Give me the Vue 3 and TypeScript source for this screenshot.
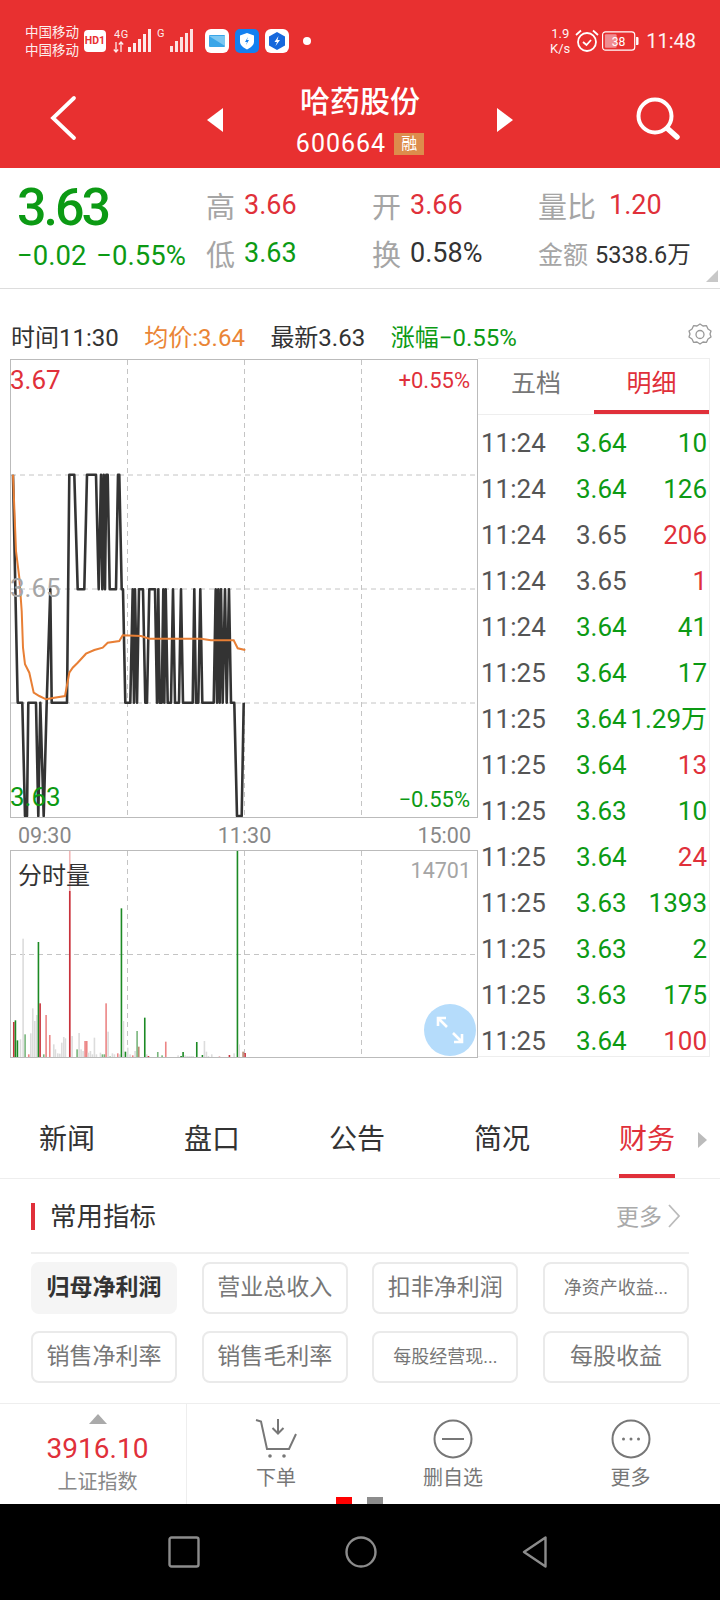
<script setup lang="ts">
type BarKind = 'r' | 'g' | 'e' | 'p' | 'q' | 'b' | 'f'
type Trade = { time: string; price: string; priceTone: string; vol: string; volTone: string }

// traced on a 3x crop of the chart, so everything here is divided by 3 below
const H = 371
const M = 715
const L = 1055
const B = 1395

const priceRaw: [number, number][] = [
  [36, H], [50, L], [64, L], [72, B], [78, B], [82, L], [105, L], [112, B], [118, L], [128, B], [137, L],
  [148, M], [152, L], [198, L], [205, H], [220, H], [230, M], [250, M], [258, H], [285, H], [293, M],
  [300, H], [304, M], [308, H], [312, M], [316, H], [320, H], [326, M], [345, M], [351, H], [355, H],
  [362, M], [366, M], [373, L], [388, L], [395, M], [399, L], [402, M], [408, L], [414, M], [426, M],
  [433, L], [438, L], [445, M], [462, M], [468, L], [472, M], [476, L], [482, L], [487, M], [490, L],
  [494, M], [500, L], [510, L], [516, M], [522, L], [534, L], [540, M], [546, L], [575, L], [580, M],
  [585, L], [592, L], [598, M], [604, L], [638, L], [644, M], [648, L], [652, M], [656, L], [660, M],
  [665, L], [672, M], [677, L], [684, M], [690, L], [700, L], [708, B], [722, B], [728, L],
]

const avgRaw: [number, number][] = [
  [36, 371], [45, 600], [55, 680], [62, 780], [66, 890], [72, 940], [85, 965], [98, 1025], [115, 1035],
  [135, 1045], [160, 1040], [192, 1035], [205, 965], [215, 950], [230, 935], [255, 908], [280, 897],
  [305, 890], [320, 875], [355, 870], [365, 853], [420, 855], [445, 863], [600, 863], [630, 868],
  [698, 868], [710, 892], [733, 897],
]

const barsRaw: [number, number, BarKind][] = [
  [38, 543, 'r'], [43, 538, 'g'], [49, 598, 'g'], [58, 595, 'e'], [66, 293, 'e'], [72, 580, 'q'], [83, 640, 'p'],
  [89, 577, 'e'], [95, 502, 'e'], [101, 540, 'e'], [107, 522, 'e'], [112, 303, 'g'], [117, 487, 'r'], [128, 640, 'q'],
  [135, 522, 'p'], [146, 582, 'p'], [158, 610, 'e'], [163, 625, 'e'], [170, 637, 'e'], [176, 638, 'e'], [182, 605, 'e'],
  [188, 588, 'e'], [193, 592, 'e'], [206, 30, 'f'], [206, 150, 'r'], [213, 585, 'e'], [228, 625, 'q'], [234, 576, 'e'],
  [240, 625, 'e'], [246, 630, 'e'], [252, 600, 'p'], [257, 600, 'p'], [262, 635, 'e'], [268, 630, 'e'], [274, 640, 'e'],
  [280, 590, 'e'], [286, 640, 'e'], [292, 650, 'g'], [298, 635, 'e'], [304, 640, 'q'], [310, 640, 'q'], [315, 487, 'p'],
  [321, 572, 'e'], [327, 647, 'g'], [334, 637, 'e'], [340, 640, 'e'], [350, 637, 'p'], [356, 640, 'e'], [361, 202, 'g'],
  [367, 540, 'e'], [373, 632, 'g'], [380, 620, 'e'], [387, 640, 'e'], [395, 643, 'p'], [402, 630, 'e'], [408, 570, 'q'],
  [413, 617, 'b'], [431, 530, 'g'], [437, 640, 'e'], [442, 645, 'r'], [449, 648, 'e'], [460, 648, 'e'], [470, 633, 'q'],
  [476, 648, 'g'], [483, 643, 'q'], [494, 602, 'p'], [506, 648, 'g'], [517, 650, 'g'], [523, 650, 'g'], [531, 643, 'e'],
  [540, 645, 'g'], [546, 633, 'g'], [552, 643, 'e'], [558, 645, 'e'], [564, 645, 'e'], [570, 645, 'e'], [576, 645, 'e'],
  [581, 648, 'r'], [587, 603, 'g'], [593, 648, 'g'], [604, 642, 'g'], [610, 600, 'e'], [616, 632, 'e'], [622, 645, 'e'],
  [632, 640, 'e'], [644, 650, 'p'], [655, 647, 'r'], [661, 648, 'p'], [668, 650, 'p'], [678, 650, 'g'], [685, 642, 'r'],
  [691, 648, 'g'], [699, 637, 'e'], [709, 30, 'g'], [714, 610, 'e'], [726, 632, 'b'], [732, 636, 'r'],
]

const barColor: Record<BarKind, string> = {
  r: '#c8323c',
  g: '#1c8a24',
  e: '#dcdcdc',
  p: '#ec8585',
  q: '#78b67c',
  b: '#b98a70',
  f: '#f2b6b6',
}

const toPoints = (raw: [number, number][]): string =>
  raw.map(([x, y]) => `${(x / 3 - 10).toFixed(1)},${(y / 3 - 9).toFixed(1)}`).join(' ')

const pricePoints = toPoints(priceRaw)
const avgPoints = toPoints(avgRaw)

const bars = barsRaw.map(([x, top, kind]) => ({
  x: x / 3 - 10.7,
  y: (top - 30) / 3,
  h: (652 - top) / 3,
  fill: barColor[kind],
}))

const G = 'up-g'
const R = 'up-r'
const N = 'up-n'

const trades: Trade[] = [
  { time: '11:24', price: '3.64', priceTone: G, vol: '10', volTone: G },
  { time: '11:24', price: '3.64', priceTone: G, vol: '126', volTone: G },
  { time: '11:24', price: '3.65', priceTone: N, vol: '206', volTone: R },
  { time: '11:24', price: '3.65', priceTone: N, vol: '1', volTone: R },
  { time: '11:24', price: '3.64', priceTone: G, vol: '41', volTone: G },
  { time: '11:25', price: '3.64', priceTone: G, vol: '17', volTone: G },
  { time: '11:25', price: '3.64', priceTone: G, vol: '1.29万', volTone: G },
  { time: '11:25', price: '3.64', priceTone: G, vol: '13', volTone: R },
  { time: '11:25', price: '3.63', priceTone: G, vol: '10', volTone: G },
  { time: '11:25', price: '3.64', priceTone: G, vol: '24', volTone: R },
  { time: '11:25', price: '3.63', priceTone: G, vol: '1393', volTone: G },
  { time: '11:25', price: '3.63', priceTone: G, vol: '2', volTone: G },
  { time: '11:25', price: '3.63', priceTone: G, vol: '175', volTone: G },
  { time: '11:25', price: '3.64', priceTone: G, vol: '100', volTone: R },
]

const tabs = ['新闻', '盘口', '公告', '简况', '财务']

const chips = [
  { text: '归母净利润', kind: 'chip--on' },
  { text: '营业总收入', kind: '' },
  { text: '扣非净利润', kind: '' },
  { text: '净资产收益...', kind: 'chip--small' },
  { text: '销售净利率', kind: '' },
  { text: '销售毛利率', kind: '' },
  { text: '每股经营现...', kind: 'chip--small' },
  { text: '每股收益', kind: '' },
]
</script>

<template>
  <div class="page">
    <header class="head">
      <div class="status">
        <div class="carriers"><span>中国移动</span><span>中国移动</span></div>
        <span class="hd">HD1</span>
        <div class="sig">
          <span class="sig__tag">4G</span>
          <svg width="40" height="24" viewBox="0 0 40 24">
            <path d="M3 13v10M.8 20.500L3 23l2.200-2.500M8 23V13M5.800 15.500L8 13l2.200 2.500" stroke="#fff" stroke-width="1.300" fill="none" opacity=".9" />
            <path d="M15 18h3v5h-3zM20 14h3v9h-3zM25 10h3v13h-3zM30 5h3v18h-3zM35 0h3v23h-3z" fill="#fff" opacity=".9" />
          </svg>
        </div>
        <div class="sig sig--g">
          <span class="sig__tag">G</span>
          <svg width="24" height="24" viewBox="0 0 24 24">
            <path d="M0 17h3v6H0zM5 12h3v11H5zM10 8h3v15h-3zM15 4h3v19h-3zM20 0h3v23h-3z" fill="#fff" opacity=".85" />
          </svg>
        </div>
        <div class="apps">
          <svg width="24" height="24" viewBox="0 0 24 24">
            <rect width="24" height="24" rx="6" fill="#fff" />
            <rect x="4" y="6" width="16" height="12" rx="1" fill="#3aa6e8" />
            <path d="M4 7l16 10V7z" fill="#7cc8f2" />
          </svg>
          <svg width="24" height="24" viewBox="0 0 24 24">
            <rect width="24" height="24" rx="5" fill="#1480f0" />
            <path d="M12 4l7 2.500v6c0 4-3.500 6-7 8-3.500-2-7-4-7-8v-6z" fill="#fff" />
            <path d="M13 8l-3 5h2l-1 3 3-5h-2z" fill="#1480f0" />
          </svg>
          <svg width="24" height="24" viewBox="0 0 24 24">
            <rect width="24" height="24" rx="6" fill="#fff" />
            <path d="M12 3l8 4.500v9L12 21l-8-4.500v-9z" fill="#1668dc" />
            <path d="M13.500 7l-4 6h2.500l-1.500 4 4.500-6h-2.500z" fill="#fff" />
          </svg>
        </div>
        <span class="status__dot"></span>
        <div class="status__right">
          <div class="speed"><span>1.9</span><span>K/s</span></div>
          <svg width="24" height="24" viewBox="0 0 24 24" fill="none" stroke="#fff" stroke-width="1.800">
            <circle cx="12" cy="13" r="9" />
            <path d="M8 13l3.500 3L16 11" />
            <path d="M1 6l5-4.500M23 6l-5-4.500" />
          </svg>
          <svg class="batt" width="37" height="20" viewBox="0 0 38 20">
            <rect x=".6" y=".6" width="33" height="18.800" rx="3" fill="none" stroke="#fff" stroke-width="1.200" />
            <rect x="3" y="3" width="12" height="14" rx="1" fill="#f08d92" />
            <path d="M35 6h1.500a1 1 0 0 1 1 1v6a1 1 0 0 1-1 1H35z" fill="#fff" />
            <text x="17" y="15" text-anchor="middle" class="batt__num">38</text>
          </svg>
          <span class="clock">11:48</span>
        </div>
      </div>
      <nav class="nav">
        <svg class="nav__back" width="30" height="46" viewBox="0 0 30 46" fill="none" stroke="#fff" stroke-width="3.800" stroke-linecap="round">
          <path d="M24 3L3 23l21 20" />
        </svg>
        <div class="nav__mid">
          <span class="tri tri--l"></span>
          <div class="nav__title">
            <strong>哈药股份</strong>
            <div class="nav__code">600664<span class="rong">融</span></div>
          </div>
          <span class="tri tri--r"></span>
        </div>
        <svg class="nav__search" width="46" height="46" viewBox="0 0 46 46" fill="none" stroke="#fff">
          <circle cx="20" cy="20" r="16.500" stroke-width="4" />
          <path d="M33 33l9 8" stroke-width="5.500" stroke-linecap="round" />
        </svg>
      </nav>
    </header>

    <section class="stats">
      <div class="stats__main">
        <div class="big">3.63</div>
        <div class="chg"><span>−0.02</span><span>−0.55%</span></div>
      </div>
      <div class="quote">
        <div class="cell"><i>高</i><b class="up-r">3.66</b></div>
        <div class="cell"><i>开</i><b class="up-r">3.66</b></div>
        <div class="cell cell--wide"><i>量比</i><b class="up-r">1.20</b></div>
        <div class="cell"><i>低</i><b class="up-g">3.63</b></div>
        <div class="cell"><i>换</i><b class="ink">0.58%</b></div>
        <div class="cell cell--small"><i>金额</i><b class="ink">5338.6万</b></div>
      </div>
      <span class="corner"></span>
    </section>

    <div class="legend">
      <span class="ink">时间11:30</span>
      <span class="legend__avg">均价:3.64</span>
      <span class="ink">最新3.63</span>
      <span class="up-g">涨幅−0.55%</span>
      <svg class="legend__gear" width="26" height="26" viewBox="0 0 26 26" fill="none" stroke="#999" stroke-width="1.300">
        <path d="M13 2l3 2 3.500-.3 1.500 3.300 3 2-1 3 1 3-3 2-1.500 3.300-3.500-.3-3 2-3-2-3.500.3L5 17l-3-2 1-3-1-3 3-2 1.500-3.300 3.500.3z" stroke-linejoin="round" />
        <circle cx="13" cy="12.500" r="4" />
      </svg>
    </div>

    <div class="board">
      <div class="charts">
        <div class="pricebox">
          <svg width="466" height="457" viewBox="0 0 466 457" class="plot">
            <g stroke="#c4c4c4" stroke-dasharray="5 4" fill="none">
              <path d="M0 115h466M0 229h466M0 343h466M116.500 0v457M233.500 0v457M350.500 0v457" />
            </g>
            <polyline :points="pricePoints" fill="none" stroke="#333" stroke-width="2.600" stroke-linejoin="round" />
            <polyline :points="avgPoints" fill="none" stroke="#e87f35" stroke-width="2" />
          </svg>
          <span class="tag tag--top up-r">3.67</span>
          <span class="tag tag--mid">3.65</span>
          <span class="tag tag--low up-g">3.63</span>
          <span class="pct pct--top up-r">+0.55%</span>
          <span class="pct pct--low up-g">−0.55%</span>
        </div>
        <div class="axis"><span>09:30</span><span>11:30</span><span>15:00</span></div>
        <div class="volbox">
          <svg width="466" height="206" viewBox="0 0 466 206" class="plot">
            <g stroke="#c4c4c4" stroke-dasharray="5 4" fill="none">
              <path d="M0 103.500h466M116.500 0v206M233.500 0v206M350.500 0v206" />
            </g>
            <rect v-for="(bar, i) in bars" :key="i" :x="bar.x" :y="bar.y" width="1.600" :height="bar.h" :fill="bar.fill" />
          </svg>
          <span class="volbox__name">分时量</span>
          <span class="volbox__max">14701</span>
          <span class="expand">
            <svg width="30" height="30" viewBox="0 0 30 30" fill="none" stroke="#fff" stroke-width="2.600">
              <path d="M3 11V3h8M3 3l9 9M27 19v8h-8M27 27l-9-9" />
            </svg>
          </span>
        </div>
      </div>

      <aside class="ticks">
        <div class="ticks__tabs">
          <span>五档</span>
          <span class="ticks__on">明细</span>
        </div>
        <div class="ticks__rows">
          <div v-for="(row, i) in trades" :key="i" class="row">
            <span class="row__time">{{ row.time }}</span>
            <span :class="['row__price', row.priceTone]">{{ row.price }}</span>
            <span :class="['row__vol', row.volTone]">{{ row.vol }}</span>
          </div>
        </div>
      </aside>
    </div>

    <div class="tabs">
      <span v-for="tab in tabs" :key="tab" :class="['tabs__item', { 'tabs__item--on': tab === '财务' }]">{{ tab }}</span>
      <span class="tabs__more"></span>
    </div>

    <section class="metrics">
      <div class="metrics__head">
        <span class="metrics__title">常用指标</span>
        <span class="metrics__more"><em>更多</em>
          <svg width="13" height="24" viewBox="0 0 13 24" fill="none" stroke="#bbb" stroke-width="1.800"><path d="M1 1l10 11L1 23" /></svg>
        </span>
      </div>
      <div class="chips">
        <span v-for="chip in chips" :key="chip.text" :class="['chip', chip.kind]">{{ chip.text }}</span>
      </div>
    </section>

    <footer class="dock">
      <div class="dock__index">
        <span class="dock__up"></span>
        <span class="dock__num">3916.10</span>
        <span class="dock__name">上证指数</span>
      </div>
      <div class="dock__acts">
        <div class="act">
          <svg width="44" height="40" viewBox="0 0 44 40" fill="none" stroke="#777" stroke-width="2">
            <path d="M2 1l5 1.500L13 30h22l7-15" />
            <path d="M24 0v14M18.500 9l5.500 5.500L29.500 9" />
            <circle cx="16" cy="37" r="1.800" fill="#777" stroke="none" />
            <circle cx="30" cy="37" r="1.800" fill="#777" stroke="none" />
          </svg>
          <span>下单</span>
        </div>
        <div class="act">
          <svg width="40" height="40" viewBox="0 0 40 40" fill="none" stroke="#777" stroke-width="2">
            <circle cx="20" cy="20" r="18.500" />
            <path d="M9 20h22" />
          </svg>
          <span>删自选</span>
        </div>
        <div class="act">
          <svg width="40" height="40" viewBox="0 0 40 40" fill="none" stroke="#777" stroke-width="2">
            <circle cx="20" cy="20" r="18.500" />
            <circle cx="12.500" cy="20" r="1.500" fill="#777" stroke="none" />
            <circle cx="20" cy="20" r="1.500" fill="#777" stroke="none" />
            <circle cx="27.500" cy="20" r="1.500" fill="#777" stroke="none" />
          </svg>
          <span>更多</span>
        </div>
      </div>
      <div class="pager"><span class="pager__on"></span><span></span></div>
    </footer>

    <div class="sysnav">
      <svg width="32" height="32" viewBox="0 0 32 32" fill="none" stroke="#8c8c8c" stroke-width="2.400"><rect x="1.500" y="1.500" width="29" height="29" rx="2" /></svg>
      <svg width="32" height="32" viewBox="0 0 32 32" fill="none" stroke="#8c8c8c" stroke-width="2.400"><circle cx="16" cy="16" r="14.500" /></svg>
      <svg width="26" height="32" viewBox="0 0 26 32" fill="none" stroke="#8c8c8c" stroke-width="2.400" stroke-linejoin="round"><path d="M23.500 1.500v29L2 16z" /></svg>
    </div>
  </div>
</template>

<style scoped>
.page {
  display: flex;
  flex-direction: column;
  width: 720px;
  height: 1600px;
  overflow: hidden;
  background: #fff;
  color: #333;
  font-family: Roboto, "Noto Sans CJK SC", sans-serif;
}

.up-r { color: #e0303a; }
.up-g { color: #0c9a14; }
.up-n { color: #555; }
.ink { color: #333; }

.head {
  flex: 0 0 168px;
  background: #e83030;
  color: #fff;
}

.status {
  display: flex;
  align-items: center;
  height: 82px;
  padding: 0 24px 0 25px;
}

.carriers {
  display: flex;
  flex-direction: column;
  width: 59px;
  font-size: 13.500px;
  line-height: 18px;
  opacity: 0.92;
}

.hd {
  width: 22px;
  height: 22px;
  border-radius: 4px;
  background: #fff;
  color: #e83030;
  font-size: 10.500px;
  font-weight: 700;
  line-height: 22px;
  text-align: center;
}

.sig {
  position: relative;
  display: flex;
  align-items: flex-end;
  height: 24px;
  margin-left: 7px;
}

.sig__tag {
  position: absolute;
  top: 0;
  left: 1px;
  font-size: 11px;
  letter-spacing: 0.5px;
  line-height: 11px;
  opacity: 0.9;
}

.sig--g {
  margin-left: 17px;
}

.sig--g .sig__tag {
  top: -1px;
  left: -13px;
}

.apps {
  display: flex;
  gap: 6px;
  margin-left: 11px;
}

.status__dot {
  width: 8px;
  height: 8px;
  margin-left: 14px;
  border-radius: 50%;
  background: #fff;
}

.status__right {
  display: flex;
  align-items: center;
  margin-left: auto;
}

.speed {
  display: flex;
  flex-direction: column;
  align-items: center;
  width: 20px;
  margin-right: 5px;
  font-size: 13px;
  line-height: 15px;
  opacity: 0.95;
}

.batt {
  margin-left: 3px;
}

.batt__num {
  fill: #fff;
  font-size: 12.500px;
}

.clock {
  margin-left: 7px;
  font-size: 20px;
  opacity: 0.95;
}

.nav {
  display: grid;
  grid-template-columns: 1fr auto 1fr;
  align-items: center;
  height: 86px;
  padding: 0 39px 0 50px;
}

.nav__back {
  margin-bottom: 14px;
}

.nav__search {
  justify-self: end;
  margin-bottom: 12px;
}

/* the arrows and the title block sit symmetric about the page centre */
.nav__mid {
  display: flex;
  align-items: flex-start;
  justify-content: space-between;
  width: 306px;
  height: 86px;
  margin-left: -11px;
}

.tri {
  width: 0;
  height: 0;
  margin-top: 26px;
  border-top: 12px solid transparent;
  border-bottom: 12px solid transparent;
}

.tri--l { border-right: 16px solid #fff; }
.tri--r { border-left: 16px solid #fff; }

.nav__title {
  display: flex;
  flex-direction: column;
  align-items: center;
  padding-top: 1px;
}

.nav__title strong {
  font-size: 30px;
  font-weight: 500;
  line-height: 38px;
}

.nav__code {
  display: flex;
  align-items: center;
  margin-top: 10px;
  font-size: 25px;
  letter-spacing: 1px;
  line-height: 26px;
}

.rong {
  display: inline-block;
  width: 30px;
  height: 22px;
  margin-left: 8px;
  background: #dd8c4c;
  font-size: 16px;
  letter-spacing: 0;
  line-height: 22px;
  text-align: center;
}

.stats {
  position: relative;
  display: flex;
  flex: 0 0 121px;
  box-sizing: border-box;
  border-bottom: 1px solid #ddd;
}

.stats__main {
  flex: 0 0 206px;
  padding: 9px 0 0 17px;
  box-sizing: border-box;
  color: #0c9a14;
}

.big {
  font-size: 52px;
  font-weight: 500;
  letter-spacing: -3px;
  line-height: 62px;
}

.chg {
  display: flex;
  gap: 10px;
  margin-top: 1px;
  font-size: 27.500px;
  line-height: 32px;
  white-space: nowrap;
}

.quote {
  display: grid;
  flex: 1;
  grid-template-columns: 166px 166px 1fr;
  grid-template-rows: 48px 48px;
  align-content: start;
  padding-top: 13px;
}

.cell {
  display: flex;
  align-items: center;
  gap: 9px;
  font-size: 27px;
}

.cell--wide {
  gap: 13px;
}

.cell i {
  color: #a5a5a5;
  font-size: 29px;
  font-style: normal;
}

.cell b {
  font-weight: 400;
}

.cell--small {
  gap: 7px;
}

.cell--small i { font-size: 25px; }
.cell--small b { font-size: 23.500px; }

.corner {
  position: absolute;
  right: 2px;
  bottom: 6px;
  width: 0;
  height: 0;
  border-bottom: 12px solid #c8c8c8;
  border-left: 12px solid transparent;
}

.legend {
  display: flex;
  flex: 0 0 70px;
  align-items: center;
  padding: 22px 7px 0 11px;
  box-sizing: border-box;
  font-size: 24px;
  gap: 25.500px;
}

.legend__avg { color: #ea8536; }

.legend__gear { margin-left: auto; }

.board {
  display: flex;
  flex: 0 0 699px;
  padding-left: 10px;
}

.charts {
  display: flex;
  flex: 0 0 468px;
  flex-direction: column;
}

.pricebox,
.volbox {
  position: relative;
  border: 1px solid #bbb;
}

.pricebox { height: 457px; }
.volbox { height: 206px; }

.plot { display: block; }

.tag {
  position: absolute;
  left: -1px;
  font-size: 26px;
  line-height: 30px;
}

.tag--top { top: 5px; }
.tag--mid { top: 213px; color: #a5a5a5; }
.tag--low { top: 422px; }

.pct {
  position: absolute;
  right: 7px;
  font-size: 22px;
  line-height: 26px;
}

.pct--top { top: 8px; }
.pct--low { top: 427px; }

.axis {
  display: flex;
  align-items: center;
  justify-content: space-between;
  height: 32px;
  padding: 2px 7px 0 8px;
  box-sizing: border-box;
  color: #888;
  font-size: 21.500px;
}

.volbox__name {
  position: absolute;
  top: 10px;
  left: 7px;
  font-size: 24px;
  line-height: 30px;
}

.volbox__max {
  position: absolute;
  top: 6px;
  right: 6px;
  color: #a5a5a5;
  font-size: 21.500px;
  line-height: 28px;
}

.expand {
  position: absolute;
  right: 1px;
  bottom: 1px;
  display: flex;
  align-items: center;
  justify-content: center;
  width: 52px;
  height: 52px;
  border-radius: 50%;
  background: #b5dcfb;
}

.ticks {
  display: flex;
  flex: 0 0 232px;
  flex-direction: column;
  box-sizing: border-box;
  height: 699px;
  border: 1px solid #eee;
  border-left: 0;
  margin-top: -1px;
}

.ticks__tabs {
  display: grid;
  flex: 0 0 55px;
  grid-template-columns: 116px 1fr;
  box-sizing: border-box;
  border-bottom: 1px solid #eee;
  color: #777;
  font-size: 25px;
  line-height: 50px;
  text-align: center;
}

.ticks__on {
  border-bottom: 4px solid #e0303a;
  height: 55px;
  box-sizing: border-box;
  color: #e0303a;
}

.ticks__rows {
  flex: 1;
  padding-top: 5px;
  overflow: hidden;
}

.row {
  display: flex;
  align-items: baseline;
  height: 46px;
  padding: 0 2px 0 3px;
  font-size: 26px;
  line-height: 46px;
  white-space: nowrap;
}

.row__time {
  flex: 0 0 95px;
  color: #555;
}

.row__price {
  flex: 0 0 50px;
}

.row__vol {
  flex: 1;
  text-align: right;
}

.tabs {
  position: relative;
  display: flex;
  flex: 0 0 64px;
  box-sizing: border-box;
  margin-top: 57px;
  padding-left: 39px;
  border-bottom: 1px solid #eee;
  font-size: 28px;
  gap: 89px;
}

.tabs__item {
  height: 63px;
  box-sizing: border-box;
  line-height: 50px;
}

.tabs__item--on {
  border-bottom: 4px solid #e0303a;
  color: #e0303a;
}

.tabs__more {
  position: absolute;
  top: 17px;
  left: 698px;
  width: 0;
  height: 0;
  border-top: 8px solid transparent;
  border-bottom: 8px solid transparent;
  border-left: 9px solid #bbb;
}

.metrics {
  flex: 0 0 224px;
  box-sizing: border-box;
  padding: 0 31px;
}

.metrics__head {
  display: flex;
  align-items: center;
  justify-content: space-between;
  height: 75px;
  border-bottom: 2px solid #eee;
  box-sizing: border-box;
  padding-top: 1px;
}

.metrics__title {
  padding-left: 15px;
  border-left: 4px solid #e0303a;
  font-size: 26.500px;
  line-height: 27px;
}

.metrics__more {
  display: flex;
  align-items: center;
  gap: 6px;
  padding-right: 8px;
  color: #aaa;
  font-size: 23px;
}

.metrics__more em {
  margin-bottom: 3px;
  font-style: normal;
}

.chips {
  display: grid;
  grid-template-columns: repeat(4, 146px);
  grid-auto-rows: 52px;
  justify-content: space-between;
  row-gap: 17px;
  margin-top: 8px;
}

.chip {
  box-sizing: border-box;
  border: 2px solid #eaeaea;
  border-radius: 8px;
  color: #777;
  font-size: 23px;
  line-height: 48px;
  text-align: center;
  white-space: nowrap;
}

.chip--on {
  border-color: #f5f5f5;
  background: #f5f5f5;
  color: #333;
  font-weight: 700;
}

.chip--small { font-size: 18px; }

.dock {
  position: relative;
  display: flex;
  flex: 0 0 101px;
  box-sizing: border-box;
  border-top: 1px solid #eee;
}

.dock__index {
  display: flex;
  flex: 0 0 187px;
  flex-direction: column;
  align-items: center;
  box-sizing: border-box;
  padding: 10px 0 0 9px;
  border-right: 1px solid #eee;
}

.dock__up {
  width: 0;
  height: 0;
  border-right: 9px solid transparent;
  border-bottom: 10px solid #aaa;
  border-left: 9px solid transparent;
}

.dock__num {
  margin-top: 7px;
  color: #e0303a;
  font-size: 28px;
  line-height: 36px;
}

.dock__name {
  color: #888;
  font-size: 20px;
  line-height: 30px;
}

.dock__acts {
  display: grid;
  flex: 1;
  grid-template-columns: 178px 176px 1fr;
  padding-top: 15px;
}

.act {
  display: flex;
  flex-direction: column;
  align-items: center;
  gap: 6px;
  color: #777;
  font-size: 20px;
  line-height: 26px;
}

.pager {
  position: absolute;
  bottom: 0;
  left: 336px;
  display: flex;
  gap: 15px;
}

.pager span {
  width: 16px;
  height: 7px;
  background: #8c8c8c;
}

.pager .pager__on {
  background: #f00;
}

.sysnav {
  display: flex;
  flex: 1;
  align-items: center;
  padding: 0 0 0 168px;
  background: #000;
  gap: 145px;
}
</style>

<style>
body {
  margin: 0;
}
</style>
